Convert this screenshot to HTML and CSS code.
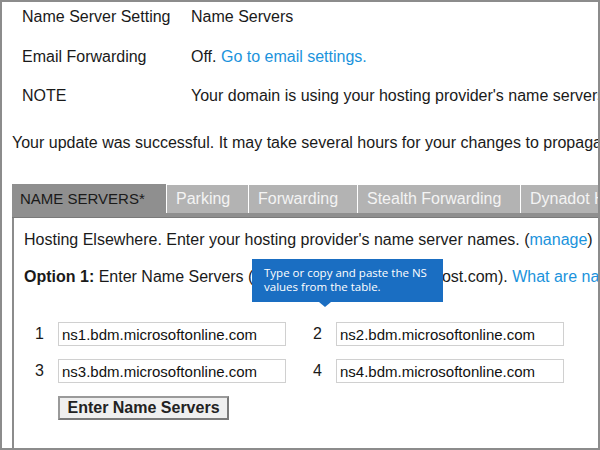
FILE: index.html
```html
<!DOCTYPE html>
<html>
<head>
<meta charset="utf-8">
<link rel="stylesheet" href="styles.css">
</head>
<body>
<div class="frame">
  <div class="info">
    <div class="label">Name Server Setting</div><div class="value">Name Servers</div>
    <div class="label">Email Forwarding</div><div class="value">Off. <a class="link">Go to email settings.</a></div>
    <div class="label">NOTE</div><div class="value">Your domain is using your hosting provider's name servers.</div>
  </div>
  <p class="success">Your update was successful. It may take several hours for your changes to propagate.</p>
  <div class="tabs">
    <div class="tab active">NAME SERVERS*</div>
    <div class="tab w-parking">Parking</div>
    <div class="tab w-forward">Forwarding</div>
    <div class="tab w-stealth">Stealth Forwarding</div>
    <div class="tab w-dyn">Dynadot Hosting</div>
  </div>
  <div class="bar"></div>
  <div class="panel">
    <p class="hosting">Hosting Elsewhere. Enter your hosting provider's name server names. (<a class="link">manage</a>)</p>
    <p class="option"><b>Option 1:</b> Enter Name Servers (ex. ns1.yourdomainnamehost.com). <a class="link">What are name servers?</a></p>
    <div class="ns-grid">
      <span class="num">1</span><input class="ns" value="ns1.bdm.microsoftonline.com">
      <span class="num">2</span><input class="ns" value="ns2.bdm.microsoftonline.com">
      <span class="num">3</span><input class="ns" value="ns3.bdm.microsoftonline.com">
      <span class="num">4</span><input class="ns" value="ns4.bdm.microsoftonline.com">
      <div class="btn-cell"><button class="btn">Enter Name Servers</button></div>
    </div>
  </div>
  <div class="tooltip">Type or copy and paste the NS values from the table.</div>
</div>
</body>
</html>
```
FILE: styles.css
```css
html, body {
  margin: 0;
  padding: 0;
  background: #fff;
}
.frame {
  position: relative;
  width: 600px;
  height: 450px;
  box-sizing: border-box;
  border: 2px solid #8c8c8c;
  overflow: hidden;
  font-family: "Liberation Sans", Arial, sans-serif;
  font-size: 16px;
  color: #1a1a1a;
  white-space: nowrap;
}
.info {
  display: grid;
  grid-template-columns: 169px auto;
  row-gap: 21.5px;
  margin: 6px 0 0 20px;
  line-height: 18px;
}
.link {
  color: #1b93dc;
}
.success {
  margin: 29px 0 0 10px;
  line-height: 18px;
}
.tabs {
  display: flex;
  gap: 1px;
  margin: 32px 0 0 10px;
  height: 29px;
  align-items: flex-end;
}
.tab {
  flex: none;
  height: 28px;
  line-height: 28px;
  background: #b3b3b3;
  color: #f4f4f4;
  padding-left: 9px;
  box-sizing: border-box;
}
.tab.active {
  height: 29px;
  width: 154px;
  background: #8f8f8f;
  color: #1a1a1a;
  padding-left: 8px;
  line-height: 30px;
  font-size: 15px;
}
.w-parking { width: 81px; }
.w-forward { width: 108px; }
.w-stealth { width: 162px; }
.w-dyn { width: 100px; }
.bar {
  margin-left: 10px;
  height: 5px;
  background: #8f8f8f;
  border-bottom: 1px solid #7a7a7a;
  box-sizing: border-box;
}
.panel {
  margin-left: 10px;
  border-left: 2px solid #8c8c8c;
  height: 240px;
  padding: 13px 0 0 10px;
}
.panel p {
  margin: 0;
  line-height: 18px;
}
.panel p.option {
  margin-top: 19px;
}
.ns-grid {
  display: grid;
  grid-template-columns: 20px 228px 22px 228px;
  column-gap: 14px;
  row-gap: 13px;
  margin-top: 36px;
  align-items: center;
}
.num {
  text-align: right;
}
.ns {
  width: 228px;
  height: 24px;
  box-sizing: border-box;
  border: 1px solid #d0d0d0;
  padding: 0 3px;
  font-family: "Liberation Sans", Arial, sans-serif;
  font-size: 15px;
  color: #111;
  margin: 0;
  outline: none;
}
.btn-cell {
  grid-column: 2 / span 3;
}
.btn {
  width: 171px;
  height: 24px;
  background: #efefef;
  border: 2px solid;
  border-color: #9a9a9a #7a7a7a #7a7a7a #9a9a9a;
  font-family: "Liberation Sans", Arial, sans-serif;
  font-weight: bold;
  font-size: 16px;
  color: #222;
  padding: 0;
  margin: 0;
}
.tooltip {
  position: absolute;
  left: 250px;
  top: 257px;
  width: 191px;
  height: 43px;
  box-sizing: border-box;
  padding: 7px 8px 0 12px;
  background: #1a6ec2;
  color: #fff;
  font-family: "Open Sans", "Noto Sans", sans-serif;
  font-size: 11.5px;
  line-height: 14px;
  white-space: normal;
}
.tooltip::after {
  content: "";
  position: absolute;
  left: 67px;
  bottom: -5px;
  border-left: 6px solid transparent;
  border-right: 6px solid transparent;
  border-top: 5px solid #1a6ec2;
}
```
